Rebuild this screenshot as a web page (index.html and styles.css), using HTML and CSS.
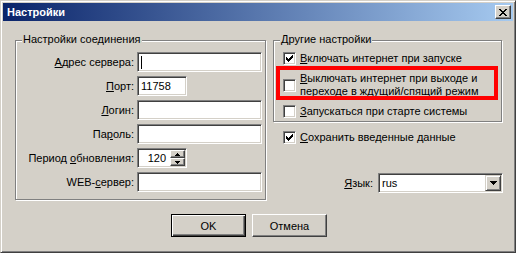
FILE: index.html
```html
<!DOCTYPE html>
<html lang="ru">
<head>
    <meta charset="UTF-8">
    <title>Настройки</title>
    <link rel="stylesheet" href="styles.css">
</head>
<body>
    <div class="window">
        <div class="titlebar">
            <span class="title">Настройки</span>
            <div class="close-btn">
                <svg width="8" height="7" viewBox="0 0 8 7" shape-rendering="crispEdges"><path d="M0 0h2v1h-2zM6 0h2v1h-2zM1 1h2v1h-2zM5 1h2v1h-2zM2 2h4v1h-4zM3 3h2v1h-2zM2 4h4v1h-4zM1 5h2v1h-2zM5 5h2v1h-2zM0 6h2v1h-2zM6 6h2v1h-2z" fill="#000"/></svg>
            </div>
        </div>

        <div class="client">
            <div class="columns">
                <div class="group conn-group">
                    <span class="group-title">Настройки соединения</span>
                    <div class="form-grid">
                        <label><u>А</u>дрес сервера:</label>
                        <div class="edit"><span class="caret"></span></div>

                        <label><u>П</u>орт:</label>
                        <div class="edit port">11758</div>

                        <label><u>Л</u>огин:</label>
                        <div class="edit"></div>

                        <label>Па<u>р</u>оль:</label>
                        <div class="edit"></div>

                        <label>Период <u>о</u>бновления:</label>
                        <div class="edit spin">
                            <span class="spin-value">120</span>
                            <div class="spin-buttons">
                                <div class="spin-btn"><svg width="5" height="3" viewBox="0 0 5 3" shape-rendering="crispEdges"><path d="M2 0h1v1h-1zM1 1h3v1h-3zM0 2h5v1h-5z"/></svg></div>
                                <div class="spin-btn"><svg width="5" height="3" viewBox="0 0 5 3" shape-rendering="crispEdges"><path d="M0 0h5v1h-5zM1 1h3v1h-3zM2 2h1v1h-1z"/></svg></div>
                            </div>
                        </div>

                        <label>WEB-<u>с</u>ервер:</label>
                        <div class="edit"></div>
                    </div>
                </div>

                <div class="right-col">
                    <div class="group other-group">
                        <span class="group-title">Другие настройки</span>
                        <div class="check-row">
                            <span class="checkbox checked"><svg width="7" height="7" viewBox="0 0 7 7" shape-rendering="crispEdges"><path d="M6 0h1v1h-1zM5 1h2v1h-2zM0 2h1v1h-1zM4 2h3v1h-3zM0 3h2v1h-2zM3 3h3v1h-3zM0 4h5v1h-5zM1 5h3v1h-3zM2 6h1v1h-1z"/></svg></span>
                            <span><u>В</u>ключать интернет при запуске</span>
                        </div>
                        <div class="check-row">
                            <span class="checkbox"></span>
                            <span><u>В</u>ыключать интернет при выходе и<br>переходе в ждущий/спящий режим</span>
                        </div>
                        <div class="check-row">
                            <span class="checkbox"></span>
                            <span><u>З</u>апускаться при старте системы</span>
                        </div>
                        <div class="highlight"></div>
                    </div>

                    <div class="check-row save-row">
                        <span class="checkbox checked"><svg width="7" height="7" viewBox="0 0 7 7" shape-rendering="crispEdges"><path d="M6 0h1v1h-1zM5 1h2v1h-2zM0 2h1v1h-1zM4 2h3v1h-3zM0 3h2v1h-2zM3 3h3v1h-3zM0 4h5v1h-5zM1 5h3v1h-3zM2 6h1v1h-1z"/></svg></span>
                        <span><u>С</u>охранить введенные данные</span>
                    </div>

                    <div class="lang-row">
                        <label><u>Я</u>зык:</label>
                        <div class="combo">
                            <span class="combo-value">rus</span>
                            <div class="combo-btn"><svg width="7" height="4" viewBox="0 0 7 4" shape-rendering="crispEdges"><path d="M0 0h7v1h-7zM1 1h5v1h-5zM2 2h3v1h-3zM3 3h1v1h-1z"/></svg></div>
                        </div>
                    </div>
                </div>
            </div>

            <div class="buttons">
                <button class="btn default">OK</button>
                <button class="btn">Отмена</button>
            </div>
        </div>
    </div>
</body>
</html>
```

FILE: styles.css
```css
* {
    box-sizing: border-box;
}

html, body {
    margin: 0;
    padding: 0;
    background-color: #d4d0c8;
    font-family: "Liberation Sans", Arial, sans-serif;
    font-size: 11px;
    color: #000;
}

u {
    text-decoration: underline;
    text-underline-offset: 1px;
}

.window {
    width: 516px;
    height: 253px;
    padding: 2px;
    border: 1px solid;
    border-color: #d4d0c8 #404040 #404040 #d4d0c8;
    box-shadow: inset 1px 1px #fff, inset -1px -1px #808080;
    background-color: #d4d0c8;
}

/* Title bar */
.titlebar {
    height: 18px;
    display: flex;
    align-items: center;
    justify-content: space-between;
    padding: 0 2px;
    background: linear-gradient(to right, #0a246a, #a6caf0);
}

.title {
    padding-left: 2px;
    color: #fff;
    font-weight: bold;
    font-size: 11px;
}

.close-btn {
    width: 16px;
    height: 14px;
    display: flex;
    align-items: center;
    justify-content: center;
    background-color: #d4d0c8;
    border: 1px solid;
    border-color: #fff #404040 #404040 #fff;
    box-shadow: inset -1px -1px #808080;
}

/* Client area */
.client {
    padding: 19px 0 0 12px;
}

.columns {
    display: flex;
    align-items: flex-start;
    gap: 7px;
}

.group {
    position: relative;
    border: 1px solid #808080;
    box-shadow: inset 1px 1px #fff, 1px 1px #fff;
}

.group-title {
    position: absolute;
    top: -8px;
    left: 6px;
    padding: 0 1px;
    line-height: 13px;
    background-color: #d4d0c8;
}

.conn-group {
    width: 251px;
    height: 160px;
    padding: 11px 2px 0 0;
}

.form-grid {
    display: grid;
    grid-template-columns: 118px 125px;
    grid-auto-rows: 20px;
    column-gap: 3px;
    row-gap: 4px;
    align-items: center;
}

.form-grid label {
    text-align: right;
}

.edit {
    width: 125px;
    height: 20px;
    display: flex;
    align-items: center;
    padding: 0 3px;
    background-color: #fff;
    border: 1px solid;
    border-color: #808080 #fff #fff #808080;
    box-shadow: inset 1px 1px #404040, inset -1px -1px #d4d0c8;
}

.edit.port {
    width: 50px;
}

.caret {
    width: 1px;
    height: 13px;
    background-color: #000;
}

.edit.spin {
    width: 50px;
    padding: 1px 1px 1px 3px;
}

.spin-value {
    flex: 1;
    text-align: right;
    padding-right: 4px;
}

.spin-buttons {
    display: flex;
    flex-direction: column;
}

.spin-btn {
    width: 15px;
    height: 8px;
    display: flex;
    align-items: center;
    justify-content: center;
    background-color: #d4d0c8;
    border: 1px solid;
    border-color: #fff #404040 #404040 #fff;
    box-shadow: inset -1px -1px #808080;
}

/* Right column */
.right-col {
    width: 229px;
    display: flex;
    flex-direction: column;
}

.other-group {
    height: 82px;
    display: flex;
    flex-direction: column;
    gap: 7px;
    padding: 11px 0 0 9px;
}

.check-row {
    display: flex;
    align-items: center;
    gap: 4px;
    line-height: 13px;
}

.checkbox {
    width: 13px;
    height: 13px;
    flex: none;
    display: flex;
    align-items: center;
    justify-content: center;
    background-color: #fff;
    border: 1px solid;
    border-color: #808080 #fff #fff #808080;
    box-shadow: inset 1px 1px #404040, inset -1px -1px #d4d0c8;
}

.highlight {
    position: absolute;
    left: 2px;
    top: 25px;
    width: 222px;
    height: 34px;
    border: 4px solid #f00;
}

.save-row {
    margin: 9px 0 0 10px;
}

.lang-row {
    display: flex;
    justify-content: flex-end;
    align-items: center;
    gap: 5px;
    margin: 29px -1px 0 0;
}

.combo {
    width: 125px;
    height: 20px;
    display: flex;
    align-items: center;
    padding: 1px 1px 1px 3px;
    background-color: #fff;
    border: 1px solid;
    border-color: #808080 #fff #fff #808080;
    box-shadow: inset 1px 1px #404040, inset -1px -1px #d4d0c8;
}

.combo-value {
    flex: 1;
}

.combo-btn {
    width: 16px;
    height: 16px;
    display: flex;
    align-items: center;
    justify-content: center;
    background-color: #d4d0c8;
    border: 1px solid;
    border-color: #d4d0c8 #404040 #404040 #d4d0c8;
    box-shadow: inset 1px 1px #fff, inset -1px -1px #808080;
}

/* Dialog buttons */
.buttons {
    display: flex;
    gap: 6px;
    margin-top: 14px;
    padding-left: 156px;
}

.btn {
    width: 75px;
    height: 23px;
    padding: 0;
    font: inherit;
    color: #000;
    background-color: #d4d0c8;
    border: 1px solid;
    border-color: #fff #404040 #404040 #fff;
    box-shadow: inset -1px -1px #808080;
}

.btn.default {
    border-color: #000;
    box-shadow: inset 1px 1px #fff, inset -1px -1px #404040, inset -2px -2px #808080;
}
```
